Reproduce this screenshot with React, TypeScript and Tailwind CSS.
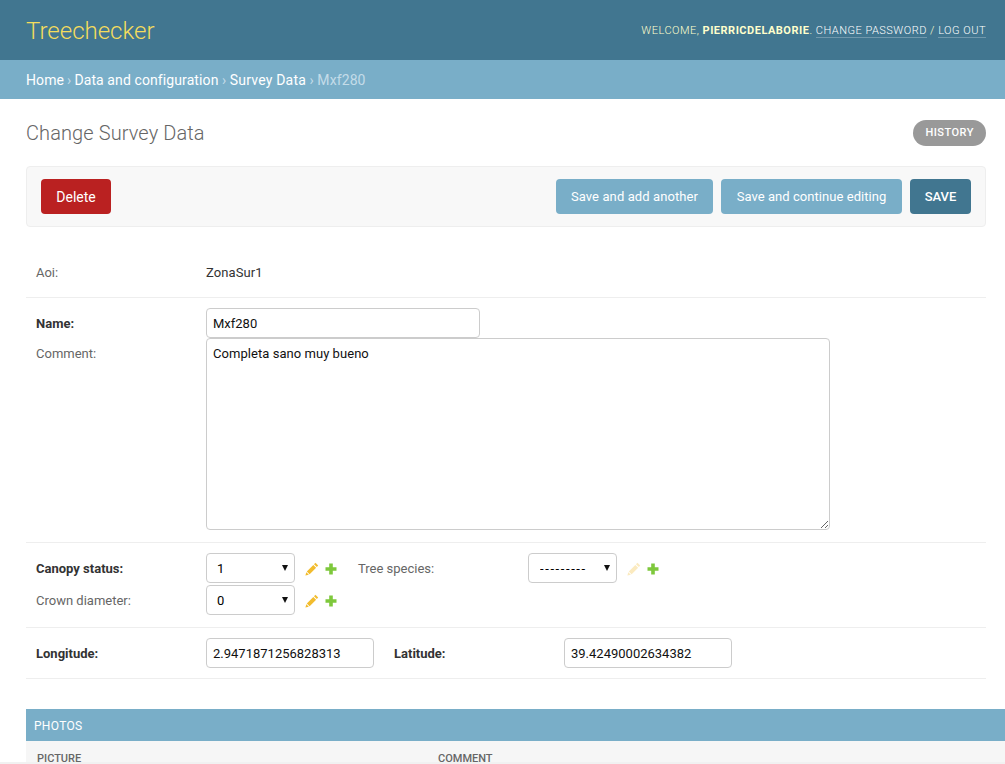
import React from "react";

const Pencil = ({ faded = false }: { faded?: boolean }) => (
  <svg width="14" height="14" viewBox="0 0 14 14" className={faded ? "opacity-30" : ""}>
    <path d="M10.4 0.8 L13.2 3.6 L11.8 5 L9 2.2 Z" fill="#f2bc2e" />
    <path d="M8.3 2.9 L11.1 5.7 L4.6 12.2 L1.8 9.4 Z" fill="#f2bc2e" />
    <path d="M1.3 10.2 L3.8 12.7 L0.4 13.6 Z" fill="#f2bc2e" />
  </svg>
);

const Plus = () => (
  <svg width="12" height="12" viewBox="0 0 12 12">
    <path d="M4.2 0.5 H7.8 V4.2 H11.5 V7.8 H7.8 V11.5 H4.2 V7.8 H0.5 V4.2 H4.2 Z" fill="#7ec83c" />
  </svg>
);

const Sel = ({ value, spaced = false }: { value: string; spaced?: boolean }) => (
  <div className="relative h-[30px] w-[89px]">
    <select
      defaultValue={value}
      className={`h-[30px] w-[89px] appearance-none rounded-[4px] border border-[#cccccc] bg-white pt-[2px] text-[13px] text-black [font-family:Roboto,sans-serif] ${
        spaced ? "pl-[11px] tracking-[1.6px]" : "pl-[10px]"
      }`}
    >
      <option value={value}>{value}</option>
    </select>
    <svg width="6" height="6" viewBox="0 0 6 6" className="pointer-events-none absolute left-[76px] top-[12px]">
      <path d="M0 0 H6 L3 6 Z" fill="#111111" />
    </svg>
  </div>
);

const Icons = ({ faded = false }: { faded?: boolean }) => (
  <div className="ml-[10px] flex items-center gap-[6px] pt-[2px]">
    <Pencil faded={faded} />
    <Plus />
  </div>
);

const inputCls =
  "h-[30px] rounded-[4px] border border-[#cccccc] bg-white px-[6px] text-[13px] text-[#111111] [font-family:Roboto,sans-serif] outline-none";

export default function App() {
  return (
    <div className="relative h-[764px] w-[1005px] overflow-hidden bg-white text-[13px] text-[#333333] [font-family:Roboto,sans-serif]">
      <header className="flex h-[60px] items-center justify-between bg-[#417690] pl-[26px] pr-[19px]">
        <div className="pt-[2px] text-[24px] font-light text-[#f5dd5d]">Treechecker</div>
        <div className="pt-[2px] text-[11px] font-light uppercase tracking-[0.5px] text-[#ffffcc]">
          Welcome, <strong className="font-bold">pierricdelaborie</strong>.{" "}
          <a className="border-b border-white/25 text-white">Change password</a> /{" "}
          <a className="border-b border-white/25 text-white">Log out</a>
        </div>
      </header>
      <nav className="flex h-[39px] items-center bg-[#79aec8] px-[26px] pt-[2px] text-[14px] tracking-[0.1px] text-[#c4dce8]">
        <a className="text-white">Home</a>
        <span className="mx-[3px]">›</span>
        <a className="text-white">Data and configuration</a>
        <span className="mx-[3.5px]">›</span>
        <a className="tracking-[0.2px] text-white">Survey Data</a>
        <span className="mx-[3.5px]">›</span>
        <span>Mxf280</span>
      </nav>

      <main className="pl-[26px] pr-[19px] pt-[21px]">
        <div className="flex h-[26px] items-center justify-between">
          <h1 className="text-[20px] font-light tracking-[0.1px] text-[#666666]">Change Survey Data</h1>
          <a className="flex h-[26px] items-center rounded-[15px] bg-[#999999] px-[12px] text-[11px] font-medium uppercase tracking-[0.5px] text-white">
            History
          </a>
        </div>

        <div className="mt-[20px] flex h-[61px] items-center justify-between rounded-[4px] border border-[#eeeeee] bg-[#f8f8f8] pl-[14px] pr-[14px]">
          <a className="flex h-[35px] w-[70px] items-center justify-center rounded-[4px] bg-[#ba2121] pt-[2px] text-[14px] font-normal text-white">
            Delete
          </a>
          <div className="flex gap-[8px]">
            <a className="flex h-[35px] w-[157px] items-center justify-center rounded-[4px] bg-[#79aec8] text-[13px] tracking-[0.1px] text-white">
              Save and add another
            </a>
            <a className="flex h-[35px] w-[181px] items-center justify-center rounded-[4px] bg-[#79aec8] text-[13px] tracking-[0.05px] text-white">
              Save and continue editing
            </a>
            <a className="flex h-[35px] w-[61px] items-center justify-center rounded-[4px] bg-[#417690] text-[13px] font-medium text-white">
              SAVE
            </a>
          </div>
        </div>

        <div className="mt-[10px]">
          <div className="flex h-[61px] items-center border-b border-[#eeeeee] pl-[10px] pt-[12px]">
            <label className="w-[170px] text-[#666666]">Aoi:</label>
            <span className="tracking-[0.1px] text-[#333333]">ZonaSur1</span>
          </div>

          <div className="border-b border-[#eeeeee] pb-[12px] pl-[10px] pt-[10px]">
            <div className="flex items-center">
              <label className="w-[170px] pt-[2px] font-bold text-[#333333]">Name:</label>
              <input readOnly value="Mxf280" className={`${inputCls} w-[274px]`} />
            </div>
            <div className="flex items-start">
              <label className="w-[170px] pt-[6px] text-[#666666]">Comment:</label>
              <textarea
                readOnly
                value="Completa sano muy bueno"
                className={`${inputCls} h-[192px] w-[624px] resize py-[5px] tracking-[0.05px]`}
              />
            </div>
          </div>

          <div className="flex flex-col gap-[2px] border-b border-[#eeeeee] pb-[12px] pl-[10px] pt-[10px]">
            <div className="flex items-center">
              <label className="w-[170px] pt-[2px] font-bold text-[#333333]">Canopy status:</label>
              <Sel value="1" />
              <Icons />
              <label className="ml-[21px] w-[170px] pt-[2px] text-[#666666]">Tree species:</label>
              <Sel value="---------" spaced />
              <Icons faded />
            </div>
            <div className="flex items-center">
              <label className="w-[170px] pt-[2px] text-[#666666]">Crown diameter:</label>
              <Sel value="0" />
              <Icons />
            </div>
          </div>

          <div className="flex h-[51px] items-center border-b border-[#eeeeee] pl-[10px]">
            <label className="w-[170px] pt-[2px] font-bold text-[#333333]">Longitude:</label>
            <input readOnly value="2.9471871256828313" className={`${inputCls} w-[168px]`} />
            <label className="ml-[20px] w-[170px] pt-[2px] font-bold text-[#333333]">Latitude:</label>
            <input readOnly value="39.42490002634382" className={`${inputCls} w-[168px]`} />
          </div>
        </div>

        <section className="-mr-[19px] mt-[30px]">
          <h2 className="flex h-[32px] items-center bg-[#79aec8] px-[8px] pt-[2px] text-[12px] font-normal uppercase tracking-[0.3px] text-white">
            Photos
          </h2>
          <div className="flex h-[40px] bg-[#f6f6f6] pt-[10px] text-[11px] font-medium uppercase text-[#666666]">
            <div className="w-[412px] pl-[11px]">Picture</div>
            <div>Comment</div>
          </div>
        </section>
      </main>
      <div className="absolute bottom-0 left-0 h-[2px] w-full bg-[#f1f1f1]" />
    </div>
  );
}
